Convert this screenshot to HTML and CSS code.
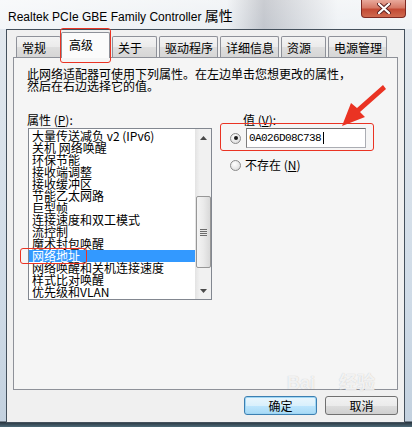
FILE: index.html
```html
<!DOCTYPE html>
<html lang="zh-CN">
<head>
  <meta charset="UTF-8">
  <title>Realtek PCIe GBE Family Controller 属性</title>
  <link rel="stylesheet" href="styles.css">
</head>
<body>
<div class="window">
  <div class="titlebar">
    <span class="title">Realtek PCIe GBE Family Controller <span class="title-cjk">属性</span></span>
    <div class="close">
      <svg width="14" height="11" viewBox="0 0 14 11">
        <path d="M2 1 L12 10 M12 1 L2 10" stroke="#5a2020" stroke-width="4" stroke-linecap="round"/>
        <path d="M2 1 L12 10 M12 1 L2 10" stroke="#ffffff" stroke-width="2.2" stroke-linecap="round"/>
      </svg>
    </div>
  </div>

  <div class="client">
    <div class="tabs">
      <div class="tab">常规</div>
      <div class="tab active">高级</div>
      <div class="tab">关于</div>
      <div class="tab">驱动程序</div>
      <div class="tab">详细信息</div>
      <div class="tab">资源</div>
      <div class="tab">电源管理</div>
    </div>

    <div class="page">
      <p class="desc">此网络适配器可使用下列属性。在左边单击您想更改的属性，<br>然后在右边选择它的值。</p>

      <div class="props">
        <div class="prop-col">
          <div class="label">属性 (<u>P</u>):</div>
          <div class="listbox">
            <ul class="items">
              <li>大量传送减负 v2 (IPv6)</li>
              <li>关机 网络唤醒</li>
              <li>环保节能</li>
              <li>接收端调整</li>
              <li>接收缓冲区</li>
              <li>节能乙太网路</li>
              <li>巨型帧</li>
              <li>连接速度和双工模式</li>
              <li>流控制</li>
              <li>魔术封包唤醒</li>
              <li class="selected">网络地址</li>
              <li>网络唤醒和关机连接速度</li>
              <li>样式比对唤醒</li>
              <li>优先级和VLAN</li>
            </ul>
            <div class="scrollbar">
              <div class="sb-btn">
                <svg width="7" height="4" viewBox="0 0 7 4"><path d="M0 4 L3.5 0 L7 4 Z" fill="#4a4a4a"/></svg>
              </div>
              <div class="sb-track">
                <div class="sb-thumb">
                  <span class="grip"></span>
                </div>
              </div>
              <div class="sb-btn">
                <svg width="7" height="4" viewBox="0 0 7 4"><path d="M0 0 L7 0 L3.5 4 Z" fill="#4a4a4a"/></svg>
              </div>
            </div>
          </div>
        </div>

        <div class="value-col">
          <div class="label value-label">值 (<u>V</u>):</div>
          <div class="radio-row">
            <span class="radio checked"></span>
            <div class="textbox">0A026D08C738<span class="caret"></span></div>
          </div>
          <div class="radio-row second">
            <span class="radio"></span>
            <span>不存在 (<u>N</u>)</span>
          </div>
        </div>
      </div>
    </div>

    <div class="buttons">
      <button class="btn default">确定</button>
      <button class="btn">取消</button>
    </div>
  </div>

  <!-- annotations drawn over the screenshot -->
  <div class="mark mark-tab"></div>
  <div class="mark mark-item"></div>
  <div class="mark mark-value"></div>
  <svg class="arrow" width="412" height="427" viewBox="0 0 412 427">
    <path d="M383 85 L357 108 L351 103 L342 126 L365 117 L360 112 L386 89 Z" fill="#ea3323"/>
  </svg>
  <div class="watermark"><span>Bai</span><span>经验</span></div>
</div>
</body>
</html>
```

FILE: styles.css
```css
* {
  margin: 0;
  padding: 0;
  box-sizing: border-box;
}

body {
  width: 412px;
  height: 427px;
  overflow: hidden;
  font-family: "Noto Sans CJK SC", "Liberation Sans", sans-serif;
  font-size: 12px;
  color: #000;
  background: #dfe6ed;
}

.window {
  position: relative;
  width: 412px;
  height: 427px;
  background: linear-gradient(to bottom, #eef1f4 0, #e2e8ee 30px, #cfdbe7 300px, #c3d1df 421px, #27323c 422px, #4d6a78 427px);
}

/* title bar */
.titlebar {
  height: 29px;
  display: flex;
  justify-content: space-between;
  align-items: flex-start;
  background: linear-gradient(to right, rgba(255,255,255,0.6) 0, rgba(255,255,255,0.3) 55%, rgba(120,120,130,0.3) 64%, rgba(255,255,255,0.4) 82%, rgba(255,255,255,0.5) 100%);
}

.title {
  padding: 8px 0 0 8px;
  font-family: "Liberation Sans", "Noto Sans CJK SC", sans-serif;
  font-size: 12px;
  line-height: 14px;
  color: #000;
}

.title-cjk {
  font-family: "Noto Sans CJK SC", sans-serif;
  font-size: 14px;
}

.close {
  width: 45px;
  height: 18px;
  margin-right: 6px;
  display: flex;
  align-items: center;
  justify-content: center;
  border: 1px solid #7e2a22;
  border-top: none;
  border-radius: 0 0 4px 4px;
  background: linear-gradient(to bottom, #e9a99b 0, #d67a67 45%, #c34a34 55%, #cf6a50 100%);
}

/* dialog body */
.client {
  width: 399px;
  height: 394px;
  margin-left: 6px;
  border: 1px solid #44505c;
  background: #f0f0f0;
  display: flex;
  flex-direction: column;
}

.tabs {
  height: 27px;
  display: flex;
  align-items: flex-end;
  gap: 2px;
  padding-left: 9px;
}

.tab {
  height: 21px;
  min-width: 45px;
  padding: 3px 4px 0 5px;
  line-height: 16px;
  border: 1px solid #8e9199;
  border-bottom: none;
  border-radius: 2px 2px 0 0;
  background: linear-gradient(to bottom, #f3f3f3 0, #ebebeb 50%, #dedede 51%, #d6d6d6 100%);
  white-space: nowrap;
}

.tab.active {
  position: relative;
  z-index: 1;
  width: 49px;
  height: 26px;
  margin-left: -2px;
  margin-bottom: -1px;
  padding: 4px 0 0 7px;
  background: #fbfbfb;
}

.page {
  height: 333px;
  margin: 0 6px 0 6px;
  border: 1px solid #8e9199;
  background: #f5f5f5;
  padding: 10px 0 0 13px;
}

.desc {
  line-height: 12px;
  white-space: nowrap;
}

.props {
  display: flex;
  margin-top: 22px;
}

.label {
  height: 14px;
  line-height: 12px;
}

.prop-col {
  width: 185px;
}

.listbox {
  width: 184px;
  height: 172px;
  margin-left: 1px;
  border: 1px solid #828790;
  background: #fff;
  display: flex;
}

.items {
  list-style: none;
  flex: 1;
  padding-top: 1px;
}

.items li {
  height: 12px;
  line-height: 12px;
  padding-left: 3px;
  white-space: nowrap;
}

.items li.selected {
  background: #3399ff;
  color: #fff;
}

.scrollbar {
  width: 16px;
  display: flex;
  flex-direction: column;
  background: linear-gradient(to right, #e3e3e3 0, #f1f1f1 30%, #f1f1f1 100%);
}

.sb-btn {
  height: 17px;
  display: flex;
  align-items: center;
  justify-content: center;
}

.sb-track {
  flex: 1;
  padding-top: 50px;
}

.sb-thumb {
  height: 72px;
  margin-left: 1px;
  border: 1px solid #979797;
  border-radius: 2px;
  background: linear-gradient(to right, #f4f4f4 0, #eaeaea 50%, #d9d9d9 100%);
  display: flex;
  align-items: center;
  justify-content: center;
}

.grip {
  width: 7px;
  height: 7px;
  background: repeating-linear-gradient(to bottom, #6b6b6b 0, #6b6b6b 1px, #e8e8e8 1px, #e8e8e8 2px);
}

.value-col {
  margin-left: 16px;
}

.value-label {
  padding-left: 15px;
}

.radio-row {
  display: flex;
  align-items: center;
  gap: 5px;
  height: 20px;
  padding-left: 2px;
}

.radio-row.second {
  margin-top: 11px;
  height: 12px;
  gap: 4px;
  line-height: 12px;
}

.radio {
  width: 11px;
  height: 11px;
  border-radius: 50%;
  border: 1px solid #8a8a8a;
  background: radial-gradient(circle at 40% 35%, #ffffff 0, #e6e6e6 60%, #cfcfcf 100%);
  display: flex;
  align-items: center;
  justify-content: center;
}

.radio.checked::after {
  content: "";
  width: 4px;
  height: 4px;
  border-radius: 50%;
  background: #1a1a1a;
}

.textbox {
  width: 120px;
  height: 20px;
  border: 1px solid #abadb3;
  border-top-color: #6d6d6d;
  border-left-color: #7d7d7d;
  background: #fff;
  padding: 0 0 0 2px;
  font-family: "Liberation Mono", monospace;
  font-size: 11px;
  letter-spacing: -0.6px;
  line-height: 18px;
  display: flex;
  align-items: center;
}

.caret {
  width: 1px;
  height: 12px;
  margin-left: 2px;
  background: #000;
}

/* bottom buttons */
.buttons {
  display: flex;
  justify-content: flex-end;
  gap: 8px;
  margin-top: 6px;
  padding-right: 6px;
}

.btn {
  width: 73px;
  height: 19px;
  font-family: "Noto Sans CJK SC", sans-serif;
  font-size: 12px;
  line-height: 16px;
  color: #000;
  border: 1px solid #707070;
  border-radius: 3px;
  background: linear-gradient(to bottom, #f2f2f2 0, #ebebeb 50%, #dddddd 51%, #cfcfcf 100%);
}

.btn.default {
  border-color: #3c7fb1;
  background: linear-gradient(to bottom, #eaf6fd 0, #d9f0fc 50%, #bee6fd 51%, #a7d9f5 100%);
  box-shadow: inset 0 0 0 1px #9fd6f4;
}

/* red annotations */
.mark {
  position: absolute;
  border: 1px solid #ea3323;
  border-radius: 3px;
}

.mark-tab {
  left: 60px;
  top: 28px;
  width: 51px;
  height: 35px;
}

.mark-item {
  left: 20px;
  top: 248px;
  width: 67px;
  height: 16px;
}

.mark-value {
  left: 220px;
  top: 123px;
  width: 154px;
  height: 28px;
}

.arrow {
  position: absolute;
  left: 0;
  top: 0;
}

.watermark {
  position: absolute;
  left: 287px;
  top: 373px;
  display: flex;
  gap: 24px;
  font-family: "Liberation Sans", "Noto Sans CJK SC", sans-serif;
  font-weight: bold;
  font-size: 18px;
  line-height: 20px;
  color: rgba(255, 255, 255, 0.8);
  text-shadow: 0 0 1px rgba(110, 110, 110, 0.4);
  pointer-events: none;
}
```
